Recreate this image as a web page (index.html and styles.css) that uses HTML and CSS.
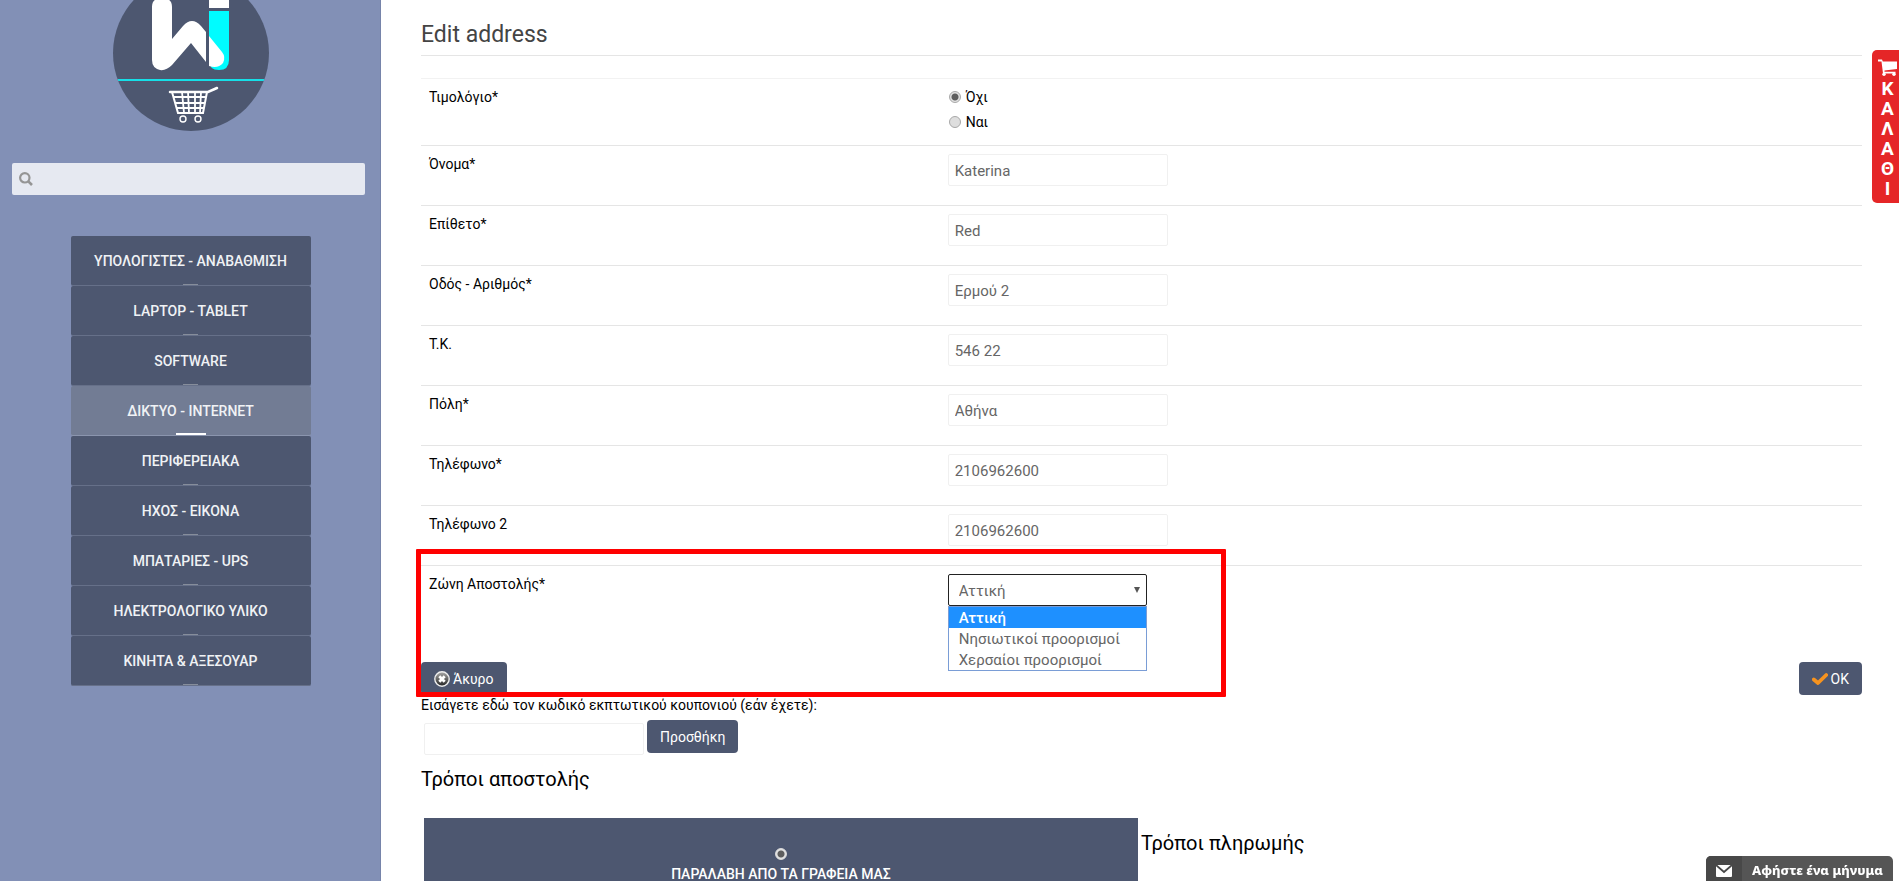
FILE: index.html
```html
<!DOCTYPE html>
<html lang="el">
<head>
<meta charset="UTF-8">
<title>Edit address</title>
<meta name="viewport" content="width=device-width, initial-scale=1.0">
<link rel="stylesheet" href="styles.css">
</head>
<body>
<div class="page">
<aside class="sidebar">
<a class="logo" href="#" aria-label="Home">
<svg width="156" height="156" viewBox="0 0 156 156">
<defs><clipPath id="disc"><circle cx="78" cy="78" r="78"/></clipPath></defs>
<g clip-path="url(#disc)">
<rect width="156" height="156" fill="#4d5770"/>
<path d="M39 32Q39 23 49 23Q59 23 59 32V64L70 51Q79 41 88 51L93 57V87L78 68L59 90Q53 96 47 95Q39 93 39 85Z" fill="#fff"/>
<path d="M96 24H116V33H96Z" fill="#fff"/>
<path d="M96 36H116V85Q116 95 106 95Q96 95 96 85Z" fill="#00fcff"/>
<path d="M96 61L109 77Q113 82 110 88Q105 94 96 91Z" fill="#fff"/>
<path d="M0 105H156" stroke="#16dfe8" stroke-width="2"/>
</g>
<g fill="none" stroke="#fff" stroke-width="2">
<path d="M57 117H95L104 113" stroke-width="2.5" stroke-linecap="round"/>
<path d="M59 117L65 138H90L94 117" />
<path d="M61 122H93M62 128H92M64 133H91M69 117L71 138M75 117L76 138M82 117V138M88 117L87 138" stroke-width="1.8"/>
<circle cx="70" cy="144" r="3" stroke-width="1.4"/><circle cx="85" cy="144" r="3" stroke-width="1.4"/>
</g>
</svg>
</a>
<form class="search">
<svg width="14" height="14" viewBox="0 0 14 14"><circle cx="5.8" cy="5.8" r="4.7" fill="none" stroke="#959595" stroke-width="2.2"/><path d="M9.3 9.3L13 13" stroke="#959595" stroke-width="2.6"/></svg>
<input type="text" aria-label="Αναζήτηση">
</form>
<nav class="menu">
<a href="#">ΥΠΟΛΟΓΙΣΤΕΣ - ΑΝΑΒΑΘΜΙΣΗ</a>
<a href="#">LAPTOP - TABLET</a>
<a href="#">SOFTWARE</a>
<a href="#" class="active">ΔΙΚΤΥΟ - INTERΝΕΤ</a>
<a href="#">ΠΕΡΙΦΕΡΕΙΑΚΑ</a>
<a href="#">ΗΧΟΣ - ΕΙΚΟΝΑ</a>
<a href="#">ΜΠΑΤΑΡΙΕΣ - UPS</a>
<a href="#">ΗΛΕΚΤΡΟΛΟΓΙΚΟ ΥΛΙΚΟ</a>
<a href="#">ΚΙΝΗΤΑ &amp; ΑΞΕΣΟΥΑΡ</a>
</nav>
</aside>

<main class="content">
<h1>Edit address</h1>
<form class="address">
<div class="row" role="radiogroup" aria-labelledby="invoice">
<span class="name" id="invoice">Τιμολόγιο*</span>
<div class="radios">
<label><input type="radio" name="invoice" checked>Όχι</label>
<label><input type="radio" name="invoice">Ναι</label>
</div>
</div>
<div class="row"><label class="name" for="firstname">Όνομα*</label><input class="text" type="text" id="firstname" value="Katerina"></div>
<div class="row"><label class="name" for="lastname">Επίθετο*</label><input class="text" type="text" id="lastname" value="Red"></div>
<div class="row"><label class="name" for="street">Οδός - Αριθμός*</label><input class="text" type="text" id="street" value="Ερμού 2"></div>
<div class="row"><label class="name" for="zip">Τ.Κ.</label><input class="text" type="text" id="zip" value="546 22"></div>
<div class="row"><label class="name" for="city">Πόλη*</label><input class="text" type="text" id="city" value="Αθήνα"></div>
<div class="row"><label class="name" for="phone">Τηλέφωνο*</label><input class="text" type="text" id="phone" value="2106962600"></div>
<div class="row"><label class="name" for="phone2">Τηλέφωνο 2</label><input class="text" type="text" id="phone2" value="2106962600"></div>
<div class="zone">
<div class="row">
<label class="name" for="zone">Ζώνη Αποστολής*</label>
<div class="dropdown">
<select id="zone">
<option>Αττική</option>
<option>Νησιωτικοί προορισμοί</option>
<option>Χερσαίοι προορισμοί</option>
</select>
<ul class="options">
<li class="selected">Αττική</li>
<li>Νησιωτικοί προορισμοί</li>
<li>Χερσαίοι προορισμοί</li>
</ul>
</div>
</div>
<div class="actions">
<button type="button" class="btn">
<svg width="16" height="16" viewBox="0 0 16 16"><defs><linearGradient id="grey" x2="0" y2="1"><stop stop-color="#aaa"/><stop offset="1" stop-color="#222"/></linearGradient></defs><circle cx="8" cy="8" r="7.2" fill="url(#grey)" stroke="#eee" stroke-width="1.4"/><path d="M5.3 5.3L10.7 10.7M10.7 5.3L5.3 10.7" stroke="#fff" stroke-width="2.8"/></svg>
Άκυρο</button>
<button type="button" class="btn">
<svg width="16" height="16" viewBox="0 0 16 16"><path d="M1.8 8.5L6 12L14.2 4" fill="none" stroke="#f7931e" stroke-width="3.8" stroke-linecap="round" stroke-linejoin="round"/></svg>
OK</button>
</div>
<div class="marker"></div>
</div>
</form>

<form class="coupon">
<label for="coupon">Εισάγετε εδώ τον κωδικό εκπτωτικού κουπονιού (εάν έχετε):</label>
<div class="coupon-line">
<input class="text" type="text" id="coupon">
<button type="button" class="btn">Προσθήκη</button>
</div>
</form>

<h2>Τρόποι αποστολής</h2>
<div class="methods">
<label class="method"><input type="radio" name="shipping" checked>ΠΑΡΑΛΑΒΗ ΑΠΟ ΤΑ ΓΡΑΦΕΙΑ ΜΑΣ</label>
<h2>Τρόποι πληρωμής</h2>
</div>
</main>
</div>

<a class="cart" href="#" aria-label="Καλάθι">
<svg width="19" height="17" viewBox="0 0 19 17" fill="#fff"><path d="M0 .5H4L4.8 2.5H19V10L6.5 11.5V12.8H17.5V14.5H5L3.5 2.5H0Z"/><circle cx="6" cy="15.2" r="1.7"/><circle cx="16" cy="15.2" r="1.7"/></svg>
<span>Κ</span><span>Α</span><span>Λ</span><span>Α</span><span>Θ</span><span>Ι</span>
</a>

<button type="button" class="chat">
<span class="chat-icon"><svg width="16" height="12" viewBox="0 0 16 12"><rect width="16" height="12" rx="1" fill="#fff"/><path d="M0 0L8 7L16 0" fill="none" stroke="#484848" stroke-width="1.8"/></svg></span>
<span class="chat-text">Αφήστε ένα μήνυμα</span>
</button>
</body>
</html>
```
FILE: styles.css
```css
* {
box-sizing: border-box;
}

body {
margin: 0;
font-family: Roboto, "Liberation Sans", sans-serif;
font-size: 14px;
line-height: 20px;
color: #000;
background: #fff;
}

.page {
display: flex;
height: 100vh;
overflow: hidden;
}

/* sidebar */
.sidebar {
flex: none;
width: 381px;
background: #8290b6;
box-shadow: inset -1px 0 #7684aa;
}

.logo {
display: block;
width: 156px;
margin: -25px auto 32px;
}

.logo svg {
display: block;
}

.search {
display: flex;
align-items: center;
height: 32px;
margin: 0 16px 0 12px;
padding: 0 7px;
background: #e6e9f1;
border-radius: 2px;
}

.search input {
flex: 1;
height: 30px;
border: 0;
outline: none;
background: none;
font: inherit;
}

.menu {
width: 240px;
margin: 41px auto 0;
}

.menu a {
display: flex;
flex-direction: column;
align-items: center;
height: 50px;
padding-top: 15px;
border-bottom: 1px solid #667089;
border-radius: 2px;
background: #4d5770;
color: #f0f2f5;
font-weight: 500;
text-decoration: none;
}

.menu a::after {
content: "";
width: 15px;
height: 1px;
margin-top: auto;
background: #868d9b;
}

.menu a.active {
background: #727c94;
border-bottom-color: #8b95ae;
}

.menu a.active::after {
width: 30px;
height: 2px;
background: #fff;
}

/* content */
.content {
flex: 1;
min-width: 0;
padding: 15px 37px 0 40px;
}

h1 {
margin: 0 0 22px;
border-bottom: 1px solid #e5e5e5;
font-size: 23px;
font-weight: 400;
line-height: 40px;
color: #444;
}

h2 {
margin: 0;
font-size: 20px;
font-weight: 400;
line-height: 30px;
}

.row {
display: flex;
align-items: flex-start;
padding: 8px 8px 13px;
border-top: 1px solid #e5e5e5;
}

.row:first-child {
border-top-color: #f2f2f2;
}

.zone .row {
border-top-color: #e5e5e5;
}

.name {
width: 36.4%;
}

.radios {
display: flex;
flex-direction: column;
gap: 5px;
}

.radios label {
display: flex;
align-items: center;
gap: 5px;
}

input[type="radio"] {
appearance: none;
width: 12px;
height: 12px;
margin: 0 0 0 1px;
border: 1px solid #a8a8a8;
border-radius: 50%;
background: #dedede;
}

input[type="radio"]:checked {
background: radial-gradient(circle, #5e5e5e 0 3px, #e2e2e2 4px);
}

.text {
width: 220px;
height: 32px;
padding: 2px 6px 0;
border: 1px solid #f0f0f0;
border-radius: 2px;
outline: none;
font: 15px Roboto, "Liberation Sans", sans-serif;
color: #666;
}

.row .text {
margin-bottom: 6px;
}

.dropdown {
position: relative;
width: 199px;
margin-bottom: 6px;
font-size: 15px;
color: #666;
}

.dropdown select {
appearance: none;
display: block;
width: 100%;
height: 32px;
padding: 2px 10px 0;
border: 1px solid #222;
border-radius: 2px;
outline: none;
background: #fff;
font: inherit;
color: inherit;
}

.dropdown::after {
content: "";
position: absolute;
top: 13px;
right: 7px;
border: 3px solid transparent;
border-top: 6px solid #555;
border-bottom: 0;
}

.options {
position: absolute;
top: 32px;
left: 0;
width: 100%;
margin: 0;
padding: 0;
border: 1px solid #7a9dd6;
background: #fff;
list-style: none;
}

.options li {
padding: 1px 10px 0;
line-height: 20px;
}

.options .selected {
background: #1e90ff;
color: #fff;
font-weight: 500;
}

.zone {
position: relative;
}

.marker {
position: absolute;
top: -16px;
left: -5px;
width: 810px;
height: 148px;
border: 5px solid #f00;
border-radius: 1px;
pointer-events: none;
}

.actions {
display: flex;
justify-content: space-between;
padding-top: 37px;
}

.btn {
display: flex;
align-items: center;
gap: 3px;
height: 33px;
padding: 0 13px;
border: 0;
border-radius: 4px;
background: #4d5770;
color: #fff;
font: 14px Roboto, "Liberation Sans", sans-serif;
}

.coupon-line {
display: flex;
gap: 3px;
padding: 5px 3px 0;
}

.coupon-line .text {
margin-top: 3px;
}

.coupon {
margin-bottom: 9px;
}

.methods {
display: flex;
gap: 3px;
padding: 24px 3px 0;
}

.methods h2 {
padding-top: 10px;
}

.method {
display: flex;
flex-direction: column;
align-items: center;
gap: 4px;
width: 714px;
height: 100px;
padding-top: 30px;
background: #4d5770;
color: #fff;
font-weight: 500;
}

.method input[type="radio"] {
margin: 0;
border-color: #ddd;
}

/* fixed widgets */
.cart {
position: fixed;
top: 50px;
right: 0;
display: flex;
flex-direction: column;
align-items: center;
width: 27px;
height: 153px;
padding: 9px 0 0 4px;
border-radius: 5px 0 0 5px;
background: #e52627;
color: #fff;
font-size: 19px;
font-weight: 700;
line-height: 20px;
text-decoration: none;
}

.cart svg {
flex: none;
margin-bottom: 3px;
}

.chat {
position: fixed;
right: 6px;
bottom: 0;
display: flex;
height: 25px;
padding: 0;
border: 0;
border-radius: 5px 5px 0 0;
overflow: hidden;
background: #555;
color: #fff;
font: 800 13px "Noto Sans", sans-serif;
}

.chat-icon {
display: flex;
align-items: center;
justify-content: center;
width: 36px;
height: 100%;
padding-top: 5px;
background: #484848;
}

.chat-text {
padding: 5px 10px 0;
}
```
